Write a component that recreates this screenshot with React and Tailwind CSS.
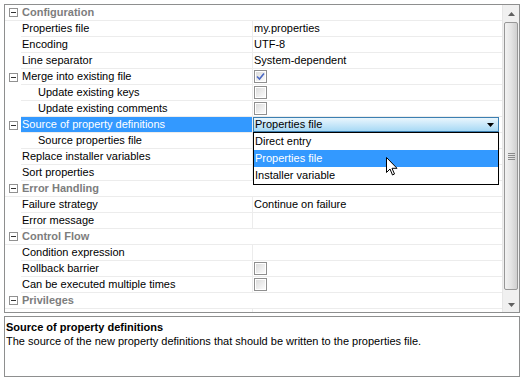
import React from 'react';

const rows = [
  { type: 'cat', label: 'Configuration' },
  { label: 'Properties file', value: 'my.properties' },
  { label: 'Encoding', value: 'UTF-8' },
  { label: 'Line separator', value: 'System-dependent' },
  { label: 'Merge into existing file', check: true, checked: true, expander: true },
  { label: 'Update existing keys', check: true, sub: true },
  { label: 'Update existing comments', check: true, sub: true },
  { label: 'Source of property definitions', expander: true, selected: true },
  { label: 'Source properties file', sub: true },
  { label: 'Replace installer variables' },
  { label: 'Sort properties' },
  { type: 'cat', label: 'Error Handling' },
  { label: 'Failure strategy', value: 'Continue on failure' },
  { label: 'Error message' },
  { type: 'cat', label: 'Control Flow' },
  { label: 'Condition expression' },
  { label: 'Rollback barrier', check: true },
  { label: 'Can be executed multiple times', check: true },
  { type: 'cat', label: 'Privileges' },
  { label: 'Action elevation type', value: 'Inherit from parent element (default)' },
];

const Minus = () => (
  <div className="w-[9px] h-[9px] border border-[#919191] bg-white flex items-center justify-center">
    <div className="w-[5px] h-px bg-[#333]" />
  </div>
);

const Check = ({ checked }) => (
  <div className="w-[13px] h-[13px] border border-[#8f8f8f] bg-white p-px">
    <div className="w-full h-full bg-gradient-to-br from-[#dcdcdc] to-[#fbfbfb] flex items-center justify-center">
      {checked && (
        <svg width="9" height="9" viewBox="0 0 9 9">
          <path d="M1 4.5 L3.5 7 L8 1.5" fill="none" stroke="#4a68c4" strokeWidth="1.6" />
        </svg>
      )}
    </div>
  </div>
);

const Row = ({ r }) => {
  if (r.type === 'cat') {
    return (
      <div className="h-[16px] flex border-b border-[#ececec] shrink-0">
        <div className="w-[16px] flex items-center justify-end pr-[3px]"><Minus /></div>
        <div className="pl-px leading-[15px] font-bold text-[#7d7d7d]">{r.label}</div>
      </div>
    );
  }
  return (
    <div className="h-[16px] flex shrink-0">
      <div className="w-[16px] flex items-center justify-end pr-[3px]">{r.expander && <Minus />}</div>
      <div className={`w-[232px] border-b border-r border-[#ececec] leading-[15px] ${r.sub ? 'pl-[17px]' : 'pl-px'} ${r.selected ? 'bg-[#3399ff] text-white' : 'text-black'}`}>
        {r.label}
      </div>
      <div className="flex-1 border-b border-[#ececec] leading-[15px] pl-px flex items-center whitespace-nowrap overflow-hidden">
        {r.check ? <Check checked={r.checked} /> : r.selected ? (
          <div className="w-[246px] h-[15px] -ml-px border border-[#3c7fb1] bg-gradient-to-b from-[#eaf6fd] to-[#a7d9f5] flex items-center justify-between pl-px pr-[4px] leading-[13px]">
            <span>Properties file</span>
            <svg width="7" height="4" viewBox="0 0 7 4"><path d="M0 0 H7 L3.5 4 Z" fill="#000" /></svg>
          </div>
        ) : r.value}
      </div>
    </div>
  );
};

export default function App() {
  return (
    <div className="w-[524px] h-[381px] bg-white relative text-[11px] font-['Liberation_Sans',Arial,sans-serif]">
      <div className="pt-1 px-1">
        <div className="h-[309px] border border-[#8e8f8f] flex overflow-hidden">
          <div className="flex-1 flex flex-col overflow-hidden">
            {rows.map((r, i) => <Row key={i} r={r} />)}
          </div>
          <div className="w-[17px] flex flex-col bg-[#f0f0f0] border-l border-[#e6e6e6]">
            <div className="h-[17px] flex items-center justify-center">
              <svg width="7" height="4" viewBox="0 0 7 4"><path d="M3.5 0 L7 4 H0 Z" fill="#606060" /></svg>
            </div>
            <div className="h-[268px] mx-px border border-[#979797] rounded-[2px] bg-gradient-to-r from-[#f2f2f2] via-[#e4e4e4] to-[#cfcfcf] flex items-center justify-center">
              <div className="flex flex-col gap-px">
                <div className="w-[7px] h-px bg-[#8a8a8a]" />
                <div className="w-[7px] h-px bg-[#8a8a8a]" />
                <div className="w-[7px] h-px bg-[#8a8a8a]" />
                <div className="w-[7px] h-px bg-[#8a8a8a]" />
              </div>
            </div>
            <div className="flex-1 flex items-end justify-center pb-[5px]">
              <svg width="7" height="4" viewBox="0 0 7 4"><path d="M0 0 H7 L3.5 4 Z" fill="#606060" /></svg>
            </div>
          </div>
        </div>
        <div className="mt-[3px] h-[61px] border border-[#8e8f8f] px-px pt-[3px] leading-[14px] text-black">
          <div className="font-bold">Source of property definitions</div>
          <div>The source of the new property definitions that should be written to the properties file.</div>
        </div>
      </div>

      <div className="absolute left-[253px] top-[132px] w-[246px] border border-black bg-white flex flex-col">
        <div className="h-[17px] leading-[17px] pl-px">Direct entry</div>
        <div className="h-[17px] leading-[17px] pl-px bg-[#3399ff] text-white">Properties file</div>
        <div className="h-[17px] leading-[17px] pl-px">Installer variable</div>
      </div>

      <svg className="absolute left-[386px] top-[157px]" width="12" height="19" viewBox="0 0 12 19">
        <path d="M0.5 0.5 V15.5 L4 12 L6.5 18 L8.5 17 L6 11.3 H11 Z" fill="#fff" stroke="#000" strokeWidth="1" strokeLinejoin="round" />
      </svg>
    </div>
  );
}
